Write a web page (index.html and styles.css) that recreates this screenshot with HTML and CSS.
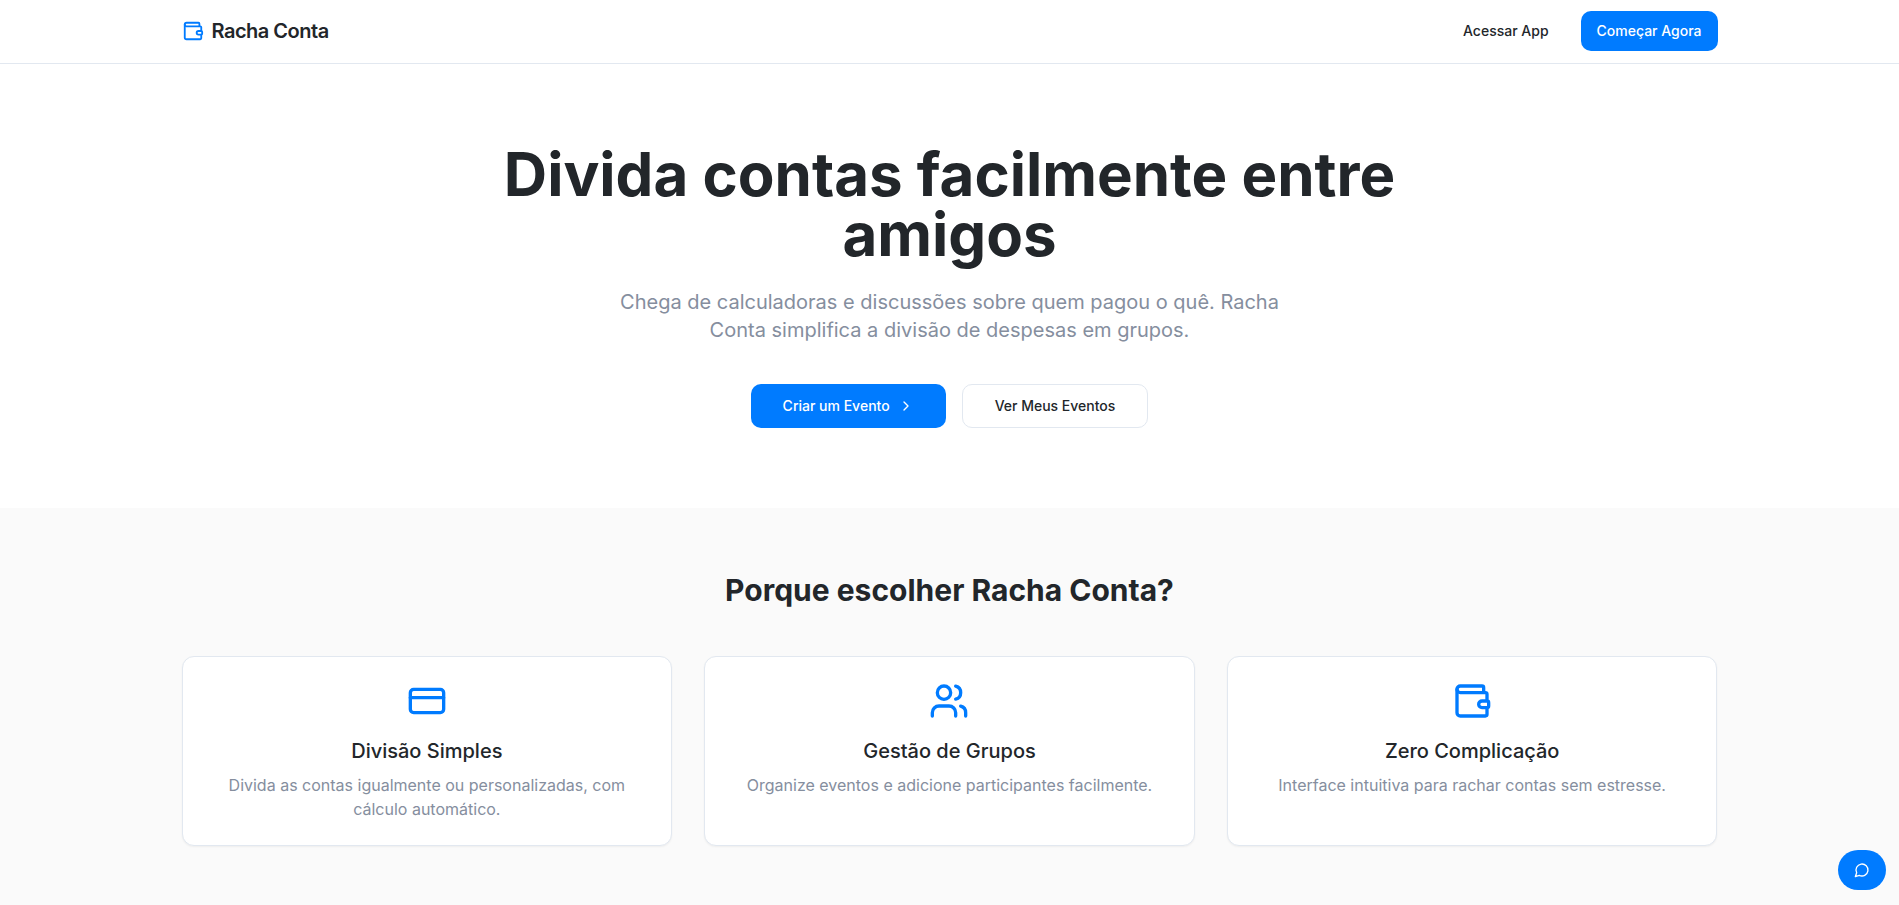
FILE: index.html
```
<!DOCTYPE html>
<html lang="pt-BR">
<head>
<meta charset="utf-8">
<meta name="viewport" content="width=device-width, initial-scale=1">
<title>Racha Conta</title>
<link rel="stylesheet" href="styles.css">
</head>
<body>
<header class="header">
  <div class="container header-row">
    <div class="brand">
      <svg class="icon icon-brand" viewBox="0 0 24 24"><path d="M19 7V4a1 1 0 0 0-1-1H5a2 2 0 0 0 0 4h15a1 1 0 0 1 1 1v4h-3a2 2 0 0 0 0 4h3a1 1 0 0 0 1-1v-2a1 1 0 0 0-1-1"/><path d="M3 5v14a2 2 0 0 0 2 2h15a1 1 0 0 0 1-1v-4"/></svg>
      <span class="brand-name">Racha Conta</span>
    </div>
    <nav class="nav">
      <a class="nav-link" href="#">Acessar App</a>
      <button class="button button-primary" type="button">Começar Agora</button>
    </nav>
  </div>
</header>
<main>
  <section class="hero">
    <div class="container hero-content">
      <h1 class="hero-title">Divida contas facilmente entre amigos</h1>
      <p class="hero-text">Chega de calculadoras e discussões sobre quem pagou o quê. Racha Conta simplifica a divisão de despesas em grupos.</p>
      <div class="hero-actions">
        <button class="button button-primary button-large" type="button">Criar um Evento <svg class="icon icon-small" viewBox="0 0 24 24"><path d="m9 18 6-6-6-6"/></svg></button>
        <button class="button button-outline button-large" type="button">Ver Meus Eventos</button>
      </div>
    </div>
  </section>
  <section class="features">
    <div class="container">
      <h2 class="features-title">Porque escolher Racha Conta?</h2>
      <div class="cards">
        <article class="card">
          <svg class="icon icon-card" viewBox="0 0 24 24"><rect width="20" height="14" x="2" y="5" rx="2"/><path d="M2 10h20"/></svg>
          <h3 class="card-title">Divisão Simples</h3>
          <p class="card-text">Divida as contas igualmente ou personalizadas, com cálculo automático.</p>
        </article>
        <article class="card">
          <svg class="icon icon-card" viewBox="0 0 24 24"><path d="M16 21v-2a4 4 0 0 0-4-4H6a4 4 0 0 0-4 4v2"/><circle cx="9" cy="7" r="4"/><path d="M22 21v-2a4 4 0 0 0-3-3.87"/><path d="M16 3.13a4 4 0 0 1 0 7.75"/></svg>
          <h3 class="card-title">Gestão de Grupos</h3>
          <p class="card-text">Organize eventos e adicione participantes facilmente.</p>
        </article>
        <article class="card">
          <svg class="icon icon-card" viewBox="0 0 24 24"><path d="M19 7V4a1 1 0 0 0-1-1H5a2 2 0 0 0 0 4h15a1 1 0 0 1 1 1v4h-3a2 2 0 0 0 0 4h3a1 1 0 0 0 1-1v-2a1 1 0 0 0-1-1"/><path d="M3 5v14a2 2 0 0 0 2 2h15a1 1 0 0 0 1-1v-4"/></svg>
          <h3 class="card-title">Zero Complicação</h3>
          <p class="card-text">Interface intuitiva para rachar contas sem estresse.</p>
        </article>
      </div>
    </div>
  </section>
</main>
<button class="chat" type="button" aria-label="Feedback"><svg class="icon icon-small" viewBox="0 0 24 24"><path d="M7.9 20A9 9 0 1 0 4 16.1L2 22Z"/></svg></button>
</body>
</html>
```
FILE: styles.css
```
* { box-sizing: border-box; margin: 0; }
body {
  font-family: Inter, sans-serif;
  font-size: 16px;
  line-height: 24px;
  color: #22262a;
  background: #fff;
}
.container {
  width: 100%;
  max-width: 1600px;
  margin: 0 auto;
  padding: 0 32px;
}
.icon {
  fill: none;
  stroke: currentColor;
  stroke-width: 2;
  stroke-linecap: round;
  stroke-linejoin: round;
  flex: none;
}
.icon-small { width: 16px; height: 16px; }
.icon-brand { width: 22px; height: 22px; color: #007bff; }
.icon-card { width: 40px; height: 40px; color: #007bff; }
.header { border-bottom: 1px solid #e2e8f0; }
.header-row {
  display: flex;
  align-items: center;
  justify-content: space-between;
  padding-top: 11px;
  padding-bottom: 12px;
}
.brand { display: flex; align-items: center; gap: 8px; }
.brand-name { font-size: 20px; line-height: 28px; font-weight: 600; letter-spacing: -0.5px; }
.nav { display: flex; align-items: center; gap: 16px; }
.nav-link {
  padding: 0 16px;
  font-size: 14px;
  font-weight: 500;
  color: inherit;
  text-decoration: none;
}
.button {
  display: inline-flex;
  align-items: center;
  justify-content: center;
  gap: 8px;
  height: 40px;
  padding: 0 16px;
  border: 0;
  border-radius: 10px;
  font: 500 14px/20px Inter, sans-serif;
  cursor: pointer;
}
.button-primary { background: #007bff; color: #fff; }
.button-outline { background: #fff; color: #22262a; border: 1px solid #e2e8f0; }
.button-large { height: 44px; padding: 0 32px; }
.hero { padding: 80px 0; }
.hero-content { display: flex; flex-direction: column; align-items: center; text-align: center; }
.hero-title { max-width: 896px; font-size: 60px; line-height: 60px; font-weight: 700; }
.hero-text { max-width: 672px; margin-top: 24px; font-size: 20px; line-height: 28px; color: #858e9e; }
.hero-actions { display: flex; gap: 16px; margin-top: 40px; }
.features { padding: 64px 0; background: #fafafa; }
.features-title { margin-bottom: 48px; text-align: center; font-size: 30px; line-height: 36px; font-weight: 700; }
.cards { display: grid; grid-template-columns: repeat(3, 1fr); gap: 32px; }
.card {
  display: flex;
  flex-direction: column;
  align-items: center;
  padding: 24px;
  border: 1px solid #e2e8f0;
  border-radius: 12px;
  background: #fff;
  text-align: center;
  box-shadow: 0 1px 2px rgb(0 0 0 / 5%);
}
.card-title { margin-top: 16px; font-size: 20px; line-height: 28px; font-weight: 500; }
.card-text { margin-top: 8px; color: #858e9e; }
.chat {
  position: fixed;
  right: 13px;
  bottom: 15px;
  display: flex;
  align-items: center;
  justify-content: center;
  width: 48px;
  height: 40px;
  padding: 0;
  border: 0;
  border-radius: 20px;
  background: #007bff;
  color: #fff;
}
```
